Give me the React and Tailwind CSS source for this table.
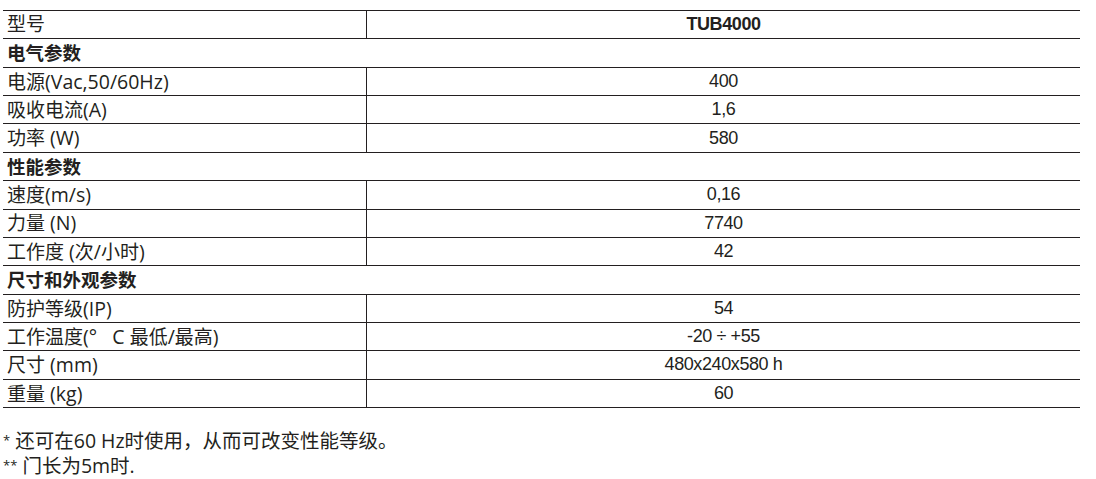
const cjk = { fontFamily: '"Open Sans", "Noto Sans CJK SC", sans-serif' }
const narrow = { fontFamily: '"Liberation Sans Narrow", "Liberation Sans", Arial, sans-serif' }

const rows = [
  { label: '型号', value: 'TUB4000', bold: true },
  { section: '电气参数' },
  { label: '电源(Vac,50/60Hz)', value: '400' },
  { label: '吸收电流(A)', value: '1,6' },
  { label: '功率 (W)', value: '580' },
  { section: '性能参数' },
  { label: '速度(m/s)', value: '0,16' },
  { label: '力量 (N)', value: '7740' },
  { label: '工作度 (次/小时)', value: '42' },
  { section: '尺寸和外观参数' },
  { label: '防护等级(IP)', value: '54' },
  { label: '工作温度(°   C 最低/最高)', value: '-20 ÷ +55' },
  { label: '尺寸 (mm)', value: '480x240x580 h' },
  { label: '重量 (kg)', value: '60' },
]

// latin runs in the labels are set a bit larger than the CJK ones
function Label({ text }) {
  const parts = text.split(/([\u4e00-\u9fff]+)/).filter(Boolean)
  return parts.map((p, i) =>
    /[\u4e00-\u9fff]/.test(p) ? (
      <span key={i}>{p}</span>
    ) : (
      <span key={i} className="text-[19.5px]">
        {p}
      </span>
    )
  )
}

export default function App() {
  return (
    <div className="h-[479px] w-[1096px] bg-white text-[#231f20]">
      <div className="ml-[3px] w-[1077px] pt-[10px]">
        <div className="border-t border-[#231f20]">
          {rows.map((row, i) =>
            row.section ? (
              <div
                key={i}
                className="flex h-[28.36px] items-center border-b border-[#231f20] pl-[4px] text-[18.5px] font-bold"
                style={cjk}
              >
                {row.section}
              </div>
            ) : (
              <div key={i} className="flex h-[28.36px] border-b border-[#231f20]">
                <div
                  className="flex w-[364px] items-center whitespace-pre border-r border-[#231f20] pl-[4px] text-[19px]"
                  style={cjk}
                >
                  <div>
                    <Label text={row.label} />
                  </div>
                </div>
                <div
                  className={`flex flex-1 items-center justify-center text-[18px] tracking-[-0.4px] ${row.bold ? 'font-bold' : ''}`}
                  style={narrow}
                >
                  {row.value}
                </div>
              </div>
            )
          )}
        </div>
      </div>
      <div className="mt-[20px] pl-[3px] text-[19.5px] leading-[25px]" style={cjk}>
        <div>
          <span className="align-top text-[13px]">*</span> 还可在60 Hz时使用，从而可改变性能等级。
        </div>
        <div>
          <span className="align-top text-[13px]">**</span> 门长为5m时.
        </div>
      </div>
    </div>
  )
}
